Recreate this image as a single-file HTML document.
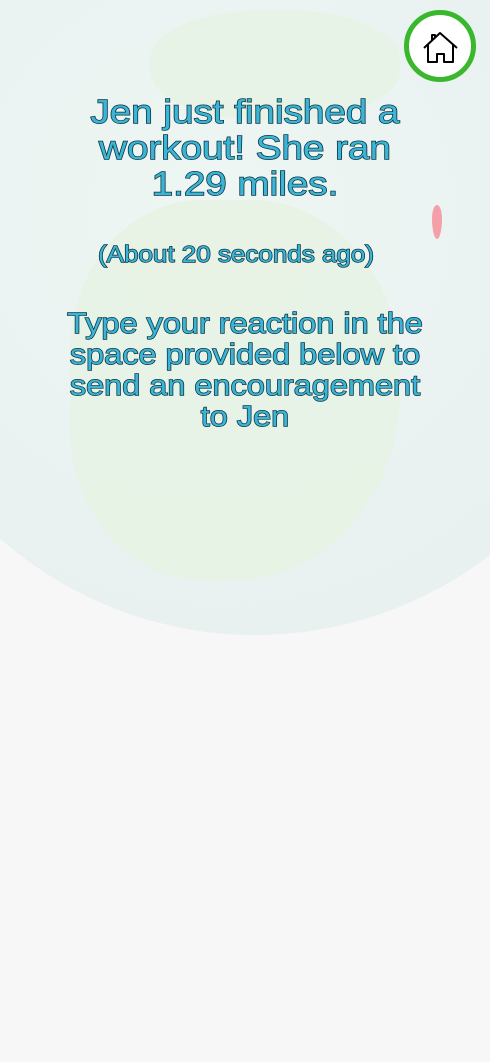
<!DOCTYPE html>
<html><head><meta charset="utf-8"><style>
html,body{margin:0;padding:0;}
body{width:490px;height:1062px;background:#f7f7f7;position:relative;overflow:hidden;font-family:"Liberation Sans",sans-serif;}
.globe{position:absolute;left:-130px;top:-135px;width:770px;height:770px;border-radius:50%;background:radial-gradient(circle at 45% 45%,#eef6f3 0%,#e9f2f1 60%,#e8eeee 100%);}
.land{position:absolute;border-radius:45%;background:#e6f3e2;opacity:.8}
.t{position:absolute;left:0;width:490px;text-align:center;color:#3cb4d6;-webkit-text-stroke:1.4px #0b3340;paint-order:stroke fill;transform-origin:center top;}
.home{position:absolute;left:404px;top:10px;width:62px;height:62px;border:5px solid #39b82e;border-radius:50%;background:#fff;}
</style></head><body>
<div class="globe"></div>
<div class="land" style="left:70px;top:200px;width:330px;height:380px;border-radius:40% 45% 50% 40%"></div>
<div class="land" style="left:150px;top:10px;width:250px;height:110px"></div>
<div style="position:absolute;left:432px;top:205px;width:10px;height:34px;background:#f4a0a8;border-radius:50% 50% 50% 50%/40% 40% 60% 60%"></div>
<div class="t" style="top:94px;font-size:33px;line-height:36px;transform:scaleX(1.17);">Jen just finished a<br>workout! She ran<br>1.29 miles.</div>
<div class="t" style="top:240px;font-size:23px;line-height:28px;left:-9px;transform:scaleX(1.13);">(About 20 seconds ago)</div>
<div class="t" style="top:309px;font-size:29px;line-height:31px;transform:scaleX(1.12);">Type your reaction in the<br>space provided below to<br>send an encouragement<br>to Jen</div>
<div class="home">
<svg width="62" height="62" viewBox="0 0 62 62"><g fill="none" stroke="#000" stroke-width="2" stroke-linejoin="round"><path d="M15 33 L31 18 L48 33"/><path d="M19 30 V47 H28 V39 H35 V47 H44 V30"/><path d="M23 25 V20 H26 V22"/></g></svg>
</div>
</body></html>
